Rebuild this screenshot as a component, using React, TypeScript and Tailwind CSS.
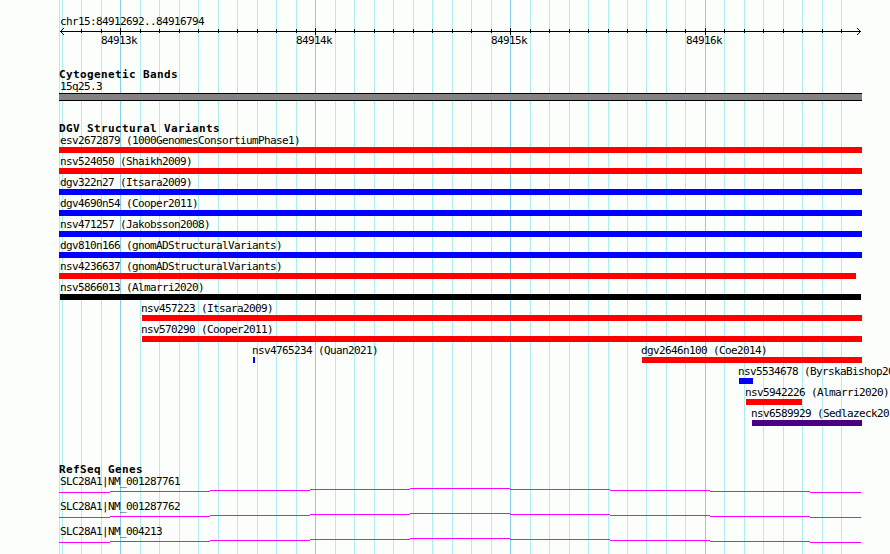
import { clsx } from "clsx";

type Feature = { name: string; start: number; end: number; color: string };

const RED = "bg-[#ff0000]";
const BLUE = "bg-[#0000ff]";

// minor grid line every 100 bp, major every 1 kb
const gridLines = Array.from({ length: 41 }, (_, i) => ({
  x: Math.floor(62.285 + i * 19.49),
  major: i % 10 === 3,
}));

const variantRows: Feature[][] = [
  [{ name: "esv2672879 (1000GenomesConsortiumPhase1)", start: 59, end: 862, color: RED }],
  [{ name: "nsv524050 (Shaikh2009)", start: 59, end: 862, color: RED }],
  [{ name: "dgv322n27 (Itsara2009)", start: 59, end: 862, color: BLUE }],
  [{ name: "dgv4690n54 (Cooper2011)", start: 59, end: 862, color: BLUE }],
  [{ name: "nsv471257 (Jakobsson2008)", start: 59, end: 862, color: BLUE }],
  [{ name: "dgv810n166 (gnomADStructuralVariants)", start: 59, end: 862, color: BLUE }],
  [{ name: "nsv4236637 (gnomADStructuralVariants)", start: 59, end: 856, color: RED }],
  [{ name: "nsv5866013 (Almarri2020)", start: 60, end: 861, color: "bg-black" }],
  [{ name: "nsv457223 (Itsara2009)", start: 142, end: 862, color: RED }],
  [{ name: "nsv570290 (Cooper2011)", start: 142, end: 862, color: RED }],
  [
    { name: "nsv4765234 (Quan2021)", start: 253, end: 255, color: BLUE },
    { name: "dgv2646n100 (Coe2014)", start: 642, end: 862, color: RED },
  ],
  [{ name: "nsv5534678 (ByrskaBishop20", start: 739, end: 753, color: BLUE }],
  [{ name: "nsv5942226 (Almarri2020)", start: 746, end: 802, color: RED }],
  [{ name: "nsv6589929 (Sedlazeck20", start: 752, end: 862, color: "bg-[#4b0082]" }],
];

const genes = ["SLC28A1|NM_001287761", "SLC28A1|NM_001287762", "SLC28A1|NM_004213"];

function Grid() {
  return (
    <svg className="absolute inset-0" width="890" height="554" shapeRendering="crispEdges">
      <rect x="59" y="0" width="1" height="554" fill="#afeeee" />
      {gridLines.map(({ x, major }) => (
        <rect key={x} x={x} y="0" width="1" height="554" fill={major ? "#87ceeb" : "#afeeee"} />
      ))}
    </svg>
  );
}

function Axis() {
  return (
    <svg className="block" width="890" height="8" shapeRendering="crispEdges">
      <rect x="60" y="3" width="801" height="1" />
      {gridLines.slice(1).map(({ x, major }) => (
        <rect key={x} x={x} y={major ? 0 : 1} width="1" height={major ? 7 : 4} />
      ))}
      <path d="M61 2h1v1h-1zM62 1h1v1h-1zM63 0h1v1h-1zM61 4h1v1h-1zM62 5h1v1h-1zM63 6h1v1h-1z" />
      <path d="M859 2h1v1h-1zM858 1h1v1h-1zM857 0h1v1h-1zM859 4h1v1h-1zM858 5h1v1h-1zM857 6h1v1h-1z" />
    </svg>
  );
}

function TrackTitle({ children }: { children: string }) {
  return (
    <h2 className="ml-[59px] h-3 text-[11px] leading-[14px] font-bold tracking-[0.378px] whitespace-pre">
      {children}
    </h2>
  );
}

function VariantRow({ features }: { features: Feature[] }) {
  return (
    <div className="flex h-[21px]">
      {features.map((f, i) => (
        <div
          key={f.name}
          className="shrink-0"
          style={{ marginLeft: f.start - (features[i - 1]?.end ?? 0), width: f.end - f.start }}
        >
          <p className={clsx("h-[13px] w-0 whitespace-pre", f.start === 59 ? "ml-px" : f.start > 60 && "-ml-px")}>
            {f.name}
          </p>
          <div className={clsx("h-1.5", f.color)} />
        </div>
      ))}
    </div>
  );
}

function Gene({ name }: { name: string }) {
  return (
    <div className="h-[25px]">
      <p className="ml-[60px] h-[13px] whitespace-pre">{name}</p>
      <svg className="block" width="890" height="5" fill="#ff00ff" shapeRendering="crispEdges">
        <path d="M59 4h51v1h-51zM110 3h100v1h-100zM210 2h100v1h-100zM310 1h100v1h-100zM410 0h100v1h-100z" />
        <path d="M510 1h100v1h-100zM610 2h100v1h-100zM710 3h100v1h-100zM810 4h51v1h-51z" />
      </svg>
    </div>
  );
}

export default function App() {
  return (
    <div className="relative h-[554px] w-[890px] overflow-hidden bg-[#fcfefc] font-['DejaVu_Sans_Mono',monospace] text-[11px] leading-[13px] tracking-[-0.622px] text-black">
      <Grid />
      <main className="relative">
        <section className="h-[68px] pt-[15px]">
          <p className="ml-[60px] h-[13px]">chr15:84912692..84916794</p>
          <Axis />
          <div className="-mt-[2px] ml-[101px] flex">
            {["84913k", "84914k", "84915k", "84916k"].map((label) => (
              <span key={label} className="w-[195px] shrink-0">
                {label}
              </span>
            ))}
          </div>
        </section>

        <section className="h-[54px]">
          <TrackTitle>Cytogenetic Bands</TrackTitle>
          <p className="ml-[60px] h-[13px]">15q25.3</p>
          <div className="ml-[59px] h-2 w-[803px] border-y border-black bg-[#848284]" />
        </section>

        <section className="h-[341px]">
          <TrackTitle>DGV Structural Variants</TrackTitle>
          {variantRows.map((row) => (
            <VariantRow key={row[0].name} features={row} />
          ))}
        </section>

        <section>
          <TrackTitle>RefSeq Genes</TrackTitle>
          {genes.map((g) => (
            <Gene key={g} name={g} />
          ))}
        </section>
      </main>
    </div>
  );
}
